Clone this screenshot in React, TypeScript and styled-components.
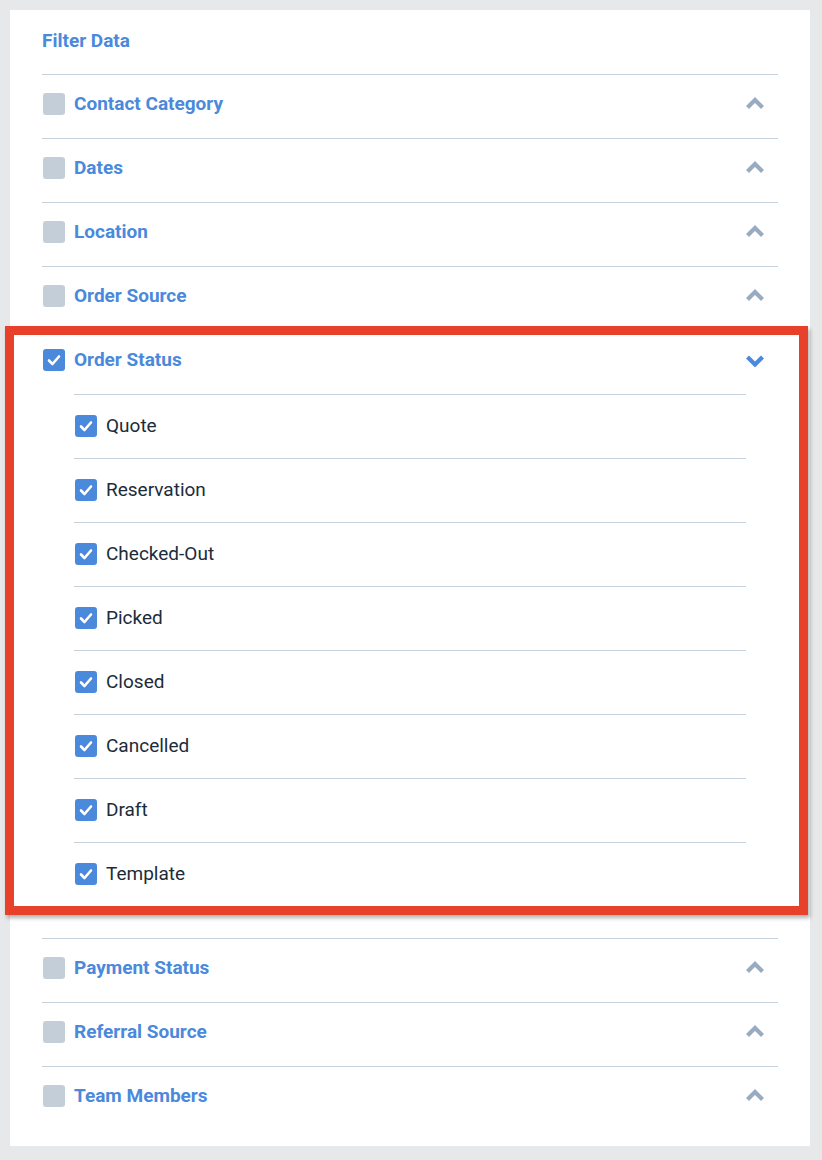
import { useState } from 'react';
import styled, { createGlobalStyle } from 'styled-components';

const GlobalStyle = createGlobalStyle`
  html, body {
    margin: 0;
    padding: 0;
    background: #e6e8ea;
    font-family: Roboto, "Liberation Sans", Arial, sans-serif;
  }
`;

type Section = {
  key: string;
  label: string;
  items?: string[];
};

const sections: Section[] = [
  { key: 'contact', label: 'Contact Category' },
  { key: 'dates', label: 'Dates' },
  { key: 'location', label: 'Location' },
  { key: 'source', label: 'Order Source' },
  {
    key: 'status',
    label: 'Order Status',
    items: ['Quote', 'Reservation', 'Checked-Out', 'Picked', 'Closed', 'Cancelled', 'Draft', 'Template'],
  },
  { key: 'payment', label: 'Payment Status' },
  { key: 'referral', label: 'Referral Source' },
  { key: 'team', label: 'Team Members' },
];

// 체크박스
const CheckBox = ({ checked }: { checked: boolean }) => (
  <Box $checked={checked}>
    {checked && (
      <svg width="22" height="22" viewBox="0 0 22 22">
        <polyline
          points="6,11.5 9.5,15 16,7.5"
          fill="none"
          stroke="#ffffff"
          strokeWidth="2.6"
          strokeLinecap="round"
          strokeLinejoin="round"
        />
      </svg>
    )}
  </Box>
);

const Chevron = ({ open }: { open: boolean }) => (
  <ChevronIcon width="20" height="14" viewBox="0 0 20 14" $open={open}>
    <polyline
      points={open ? '2.5,4 10,11.5 17.5,4' : '2.5,10.5 10,3 17.5,10.5'}
      fill="none"
      stroke="currentColor"
      strokeWidth="4.2"
      strokeLinejoin="miter"
    />
  </ChevronIcon>
);

const App = () => {
  const [openKey, setOpenKey] = useState<string>('status');

  return (
    <>
      <GlobalStyle />
      <Page>
        <Card>
          <Title>Filter Data</Title>
          {sections.map((section) => {
            const open = openKey === section.key;
            return (
              <SectionBlock key={section.key} $open={open}>
                {open && <Highlight />}
                <HeaderRow onClick={() => setOpenKey(open ? '' : section.key)}>
                  <CheckBox checked={open} />
                  <HeaderLabel>{section.label}</HeaderLabel>
                  <Chevron open={open} />
                </HeaderRow>
                {open && section.items && (
                  <SubList>
                    {section.items.map((item) => (
                      <SubRow key={item}>
                        <CheckBox checked={true} />
                        <SubLabel>{item}</SubLabel>
                      </SubRow>
                    ))}
                  </SubList>
                )}
              </SectionBlock>
            );
          })}
        </Card>
      </Page>
    </>
  );
};

export default App;

const Page = styled.div`
  padding: 10px 12px 14px 10px;
`;

const Card = styled.div`
  width: 800px;
  background: #ffffff;
  padding: 0 32px 16px 32px;
  box-sizing: border-box;
`;

const Title = styled.div`
  padding: 20px 0 22px 0;
  line-height: 22px;
  font-size: 19px;
  font-weight: 700;
  color: #4a89dc;
`;

const SectionBlock = styled.div<{ $open: boolean }>`
  position: relative;
  border-top: 1px solid #c9d3dd;
  padding-bottom: ${(props) => (props.$open ? '32px' : '0')};
`;

const Highlight = styled.div`
  position: absolute;
  left: -37px;
  top: -5px;
  width: 803px;
  height: 589px;
  border: 9px solid #e8412b;
  box-sizing: border-box;
  box-shadow: 2px 3px 4px rgba(0, 0, 0, 0.3);
  pointer-events: none;
`;

const HeaderRow = styled.div`
  display: flex;
  align-items: center;
  gap: 9px;
  padding: 18px 13px 23px 1px;
  cursor: pointer;
`;

const HeaderLabel = styled.span`
  flex: 1;
  font-size: 19px;
  line-height: 22px;
  font-weight: 700;
  color: #4a89dc;
`;

const ChevronIcon = styled.svg<{ $open: boolean }>`
  color: ${(props) => (props.$open ? '#4a89dc' : '#97abc1')};
`;

const Box = styled.span<{ $checked: boolean }>`
  display: inline-flex;
  width: 22px;
  height: 22px;
  border-radius: 3px;
  flex-shrink: 0;
  background: ${(props) => (props.$checked ? '#4a89dc' : '#c4ced8')};
`;

const SubList = styled.div`
  margin: 0 32px 0 32px;
`;

const SubRow = styled.div`
  display: flex;
  align-items: center;
  gap: 9px;
  border-top: 1px solid #c9d3dd;
  padding: 20px 0 21px 1px;
`;

const SubLabel = styled.span`
  font-size: 19px;
  line-height: 22px;
  color: #1c2b3a;
`;
